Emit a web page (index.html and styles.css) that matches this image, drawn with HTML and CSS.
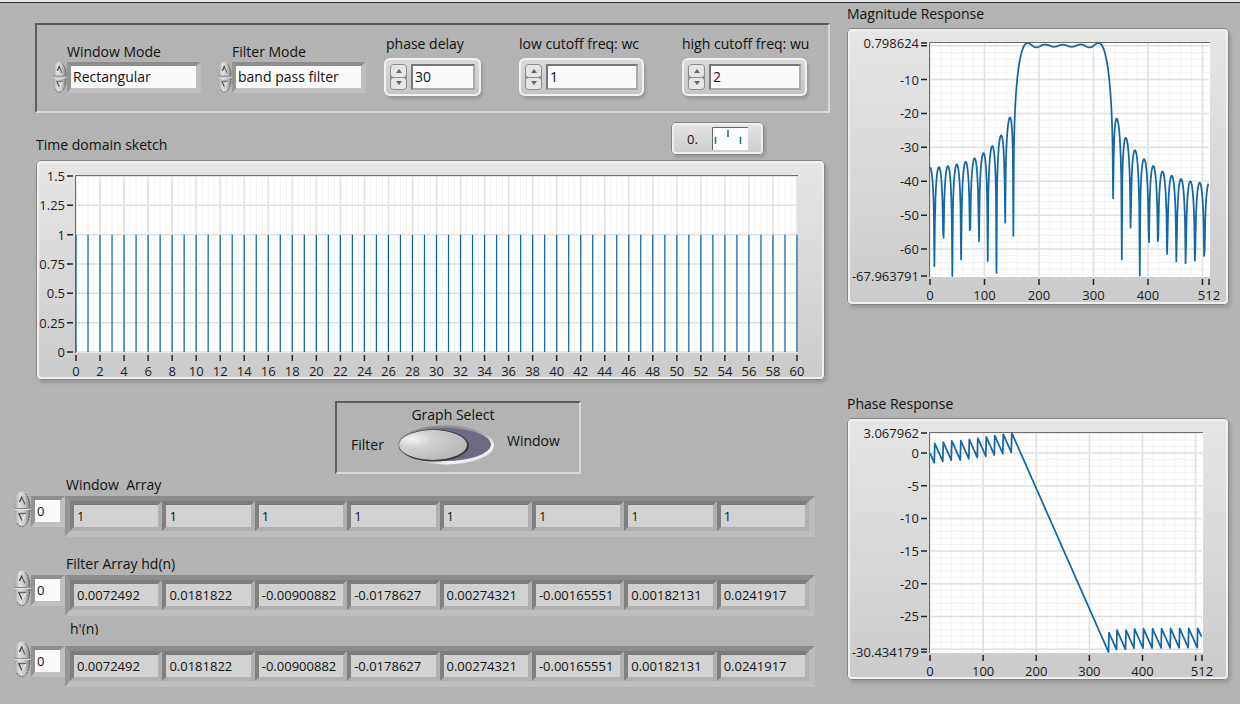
FILE: index.html
```html
<!DOCTYPE html>
<html lang="en">
<head>
<meta charset="utf-8">
<title>FIR Filter Design</title>
<link rel="stylesheet" href="styles.css">
</head>
<body>
<svg class="defs" aria-hidden="true">
  <defs>
    <linearGradient id="oval" x1="0" x2="1" y1="0" y2="0">
      <stop offset="0" stop-color="#a0a0a0"/><stop offset=".35" stop-color="#dedede"/>
      <stop offset=".7" stop-color="#c4c4c4"/><stop offset="1" stop-color="#7c7c7c"/>
    </linearGradient>
    <linearGradient id="rim" x1="0" x2="1" y1="0" y2="1">
      <stop offset="0" stop-color="#777"/><stop offset=".5" stop-color="#a0a0a0"/><stop offset=".75" stop-color="#f4f4f4"/><stop offset="1" stop-color="#ddd"/>
    </linearGradient>
    <radialGradient id="knob" cx=".2" cy=".3" r=".9">
      <stop offset="0" stop-color="#f4f4f4"/><stop offset=".3" stop-color="#d2d2d2"/><stop offset="1" stop-color="#b4b4b4"/>
    </radialGradient>
  </defs>
  <symbol id="ring-up" viewBox="0 0 18 18">
    <path d="M1 17.500C1 8 4 .5 9 .5S17 8 17 17.500Z" fill="url(#oval)"/>
    <path d="M12 2.500C15 5 17 11 17 17" fill="none" stroke="#555" stroke-dasharray="2 1"/>
    <path d="M1 17.500H17" stroke="#8a8a8a"/>
    <path d="M5.500 13L8.500 6.500" stroke="#eee" stroke-width="1.200"/>
    <path d="M8.500 6L12 13.500" stroke="#666" stroke-width="1.300"/>
    <path d="M6.500 11L9 5.500" stroke="#333" stroke-width="1.300"/>
  </symbol>
  <symbol id="ring-down" viewBox="0 0 18 18">
    <path d="M1 .5C1 10 4 17.500 9 17.500S17 10 17 .5Z" fill="url(#oval)"/>
    <path d="M17 1C17 8 14 17.500 9 17.500C7 17.500 5 16 4 14" fill="none" stroke="#5c5c5c" stroke-dasharray="2 1"/>
    <path d="M1 .5H17" stroke="#e2e2e2"/>
    <path d="M5 4.500H13" stroke="#666" stroke-width="1.400"/>
    <path d="M6 5L9 11.500" stroke="#444" stroke-width="1.300"/>
    <path d="M12.500 5L9.500 11.500" stroke="#f0f0f0" stroke-width="1.200"/>
  </symbol>
</svg>
<div class="title-edge"></div>
<main class="front-panel">
  <section class="left">
    <form class="settings sunken">
      <div class="field mode">
        <label for="window-mode">Window Mode</label>
        <div class="ring-row">
          <span class="ring"><button type="button" aria-label="Previous window"><svg><use href="#ring-up"/></svg></button><button type="button" aria-label="Next window"><svg><use href="#ring-down"/></svg></button></span>
          <select id="window-mode" class="bevel"><option>Rectangular</option></select>
        </div>
      </div>
      <div class="field mode">
        <label for="filter-mode">Filter Mode</label>
        <div class="ring-row">
          <span class="ring"><button type="button" aria-label="Previous filter"><svg><use href="#ring-up"/></svg></button><button type="button" aria-label="Next filter"><svg><use href="#ring-down"/></svg></button></span>
          <select id="filter-mode" class="bevel"><option>band pass filter</option></select>
        </div>
      </div>
      <div class="field delay">
        <label for="delay">phase delay</label>
        <div class="numeric"><span class="steps"><button type="button" class="up" aria-label="Increase delay"></button><button type="button" class="down" aria-label="Decrease delay"></button></span><input id="delay" value="30"></div>
      </div>
      <div class="field cutoff">
        <label for="low">low cutoff freq: wc</label>
        <div class="numeric"><span class="steps"><button type="button" class="up" aria-label="Increase low cutoff"></button><button type="button" class="down" aria-label="Decrease low cutoff"></button></span><input id="low" value="1"></div>
      </div>
      <div class="field cutoff">
        <label for="high">high cutoff freq: wu</label>
        <div class="numeric"><span class="steps"><button type="button" class="up" aria-label="Increase high cutoff"></button><button type="button" class="down" aria-label="Decrease high cutoff"></button></span><input id="high" value="2"></div>
      </div>
    </form>

    <div class="sketch-head">
      <h2>Time domain sketch</h2>
      <div class="legend raised">
        <span>0.</span>
        <svg class="sample" viewBox="0 0 36 23" aria-hidden="true">
          <path d="M0 0H36V23H0Z" fill="#fff"/><path d="M.5 23V.5H36" fill="none" stroke="#666"/>
          <path d="M3.500 10V17M16 3V10M28.500 10V17" stroke="#1467a5" stroke-width="1.500"/>
        </svg>
      </div>
    </div>
    <div class="chart time-chart raised"><svg id="time" viewBox="0 0 789 220" role="img" aria-label="Time domain sketch"></svg></div>

    <div class="selector sunken">
      <h2 id="graph-select">Graph Select</h2>
      <div class="selector-row">
        <span>Filter</span>
        <button type="button" class="switch" role="switch" aria-checked="false" aria-labelledby="graph-select">
          <svg viewBox="0 0 98 40">
            <ellipse cx="49" cy="20" rx="48" ry="19.500" fill="url(#rim)"/>
            <ellipse cx="48" cy="19.500" rx="46" ry="16.500" fill="#6c6b83"/>
            <ellipse cx="37" cy="20.500" rx="35" ry="16" fill="#383838"/>
            <ellipse cx="36" cy="20" rx="34" ry="15" fill="url(#knob)"/>
          </svg>
        </button>
        <span class="high">Window</span>
      </div>
    </div>

    <div class="arrays">
      <section class="array">
        <h2>Window&nbsp; Array</h2>
        <div class="array-row">
          <span class="ring"><button type="button" aria-label="Next index"><svg><use href="#ring-up"/></svg></button><button type="button" aria-label="Previous index"><svg><use href="#ring-down"/></svg></button></span>
          <input class="index bevel" aria-label="Window Array index" value="0">
          <div class="cells"><output>1</output><output>1</output><output>1</output><output>1</output><output>1</output><output>1</output><output>1</output><output>1</output></div>
        </div>
      </section>
      <section class="array">
        <h2>Filter Array hd(n)</h2>
        <div class="array-row">
          <span class="ring"><button type="button" aria-label="Next index"><svg><use href="#ring-up"/></svg></button><button type="button" aria-label="Previous index"><svg><use href="#ring-down"/></svg></button></span>
          <input class="index bevel" aria-label="Filter Array index" value="0">
          <div class="cells"><output>0.0072492</output><output>0.0181822</output><output>-0.00900882</output><output>-0.0178627</output><output>0.00274321</output><output>-0.00165551</output><output>0.00182131</output><output>0.0241917</output></div>
        </div>
      </section>
      <section class="array clipped">
        <h2>h'(n)</h2>
        <div class="array-row">
          <span class="ring"><button type="button" aria-label="Next index"><svg><use href="#ring-up"/></svg></button><button type="button" aria-label="Previous index"><svg><use href="#ring-down"/></svg></button></span>
          <input class="index bevel" aria-label="h'(n) index" value="0">
          <div class="cells"><output>0.0072492</output><output>0.0181822</output><output>-0.00900882</output><output>-0.0178627</output><output>0.00274321</output><output>-0.00165551</output><output>0.00182131</output><output>0.0241917</output></div>
        </div>
      </section>
    </div>
  </section>

  <section class="right">
    <h2>Magnitude Response</h2>
    <div class="chart raised"><svg id="magnitude" viewBox="0 0 382 277" role="img" aria-label="Magnitude Response"></svg></div>
    <h2 class="phase-title">Phase Response</h2>
    <div class="chart raised"><svg id="phase" viewBox="0 0 382 262" role="img" aria-label="Phase Response"></svg></div>
  </section>
</main>
<script src="charts.js"></script>
</body>
</html>
```

FILE: styles.css
```css
* { box-sizing: border-box; }

body {
  margin: 0;
  background: #b3b3b3;
  color: #111;
  font: 13px/20px "Open Sans", "Noto Sans", sans-serif;
}

button, input, select { font: inherit; color: inherit; margin: 0; }
h2, label { display: block; margin: 0; font-size: 14px; font-weight: 400; line-height: 20px; white-space: nowrap; }
button { padding: 0; border: 0; background: none; }
.defs { position: absolute; width: 0; height: 0; }

.title-edge { height: 3px; background: #e2e6e4; border-bottom: 1px solid #2b2b2b; }

.front-panel {
  display: grid;
  grid-template-columns: 817fr 382fr;
  gap: 17px;
  padding: 0 11px 16px 13px;
}
.left { padding-top: 20px; min-width: 0; }
.right { padding-top: 1px; min-width: 0; }

.sunken { border: 2px solid; border-color: #5c5c5c #d9d9d9 #d9d9d9 #5c5c5c; }
.raised {
  border-radius: 5px;
  background: linear-gradient(#e6e6e6, #cbcbcb);
  box-shadow: inset 0 0 0 1px #858585, inset 0 0 0 3px #f0f0f0, 2px 3px 3px #999;
}
.bevel {
  border-style: solid;
  border-width: 4px 5px 5px 4px;
  border-color: #8d8d8d #bebebe #c0c0c0 #949494;
  border-radius: 0;
  background: #fafafa;
  outline: 0;
}

.settings { display: flex; justify-content: space-between; margin-left: 22px; height: 90px; padding: 9px 21px 0 15px; }
.mode { padding-top: 8px; width: 149px; }
.mode label { padding-left: 15px; }
.mode + .mode { margin-left: -22px; }
.mode + .delay { margin-left: -20px; }
.ring-row { display: flex; }
.ring { display: flex; flex-direction: column; flex: none; width: 18px; height: 36px; margin-top: -5px; }
.ring button, .ring svg { display: block; width: 100%; height: 100%; min-height: 0; }
.ring button { flex: 1; }
.ring-row .ring { width: 15px; height: 32px; margin-top: -1px; }
.ring-row select { appearance: none; flex: 1; min-width: 0; height: 31px; padding: 0 0 0 2px; font-size: 14px; line-height: 20px; }

.delay { width: 97px; }
.cutoff { width: 125px; }
.delay label, .cutoff label { padding-left: 2px; margin-bottom: 4px; }
.cutoff label { padding-left: 0; }
.numeric {
  display: flex;
  gap: 4px;
  height: 38px;
  padding: 4px;
  border: 2px solid #f2f2f2;
  border-radius: 6px;
  background: linear-gradient(#dadada, #c6c6c6);
  box-shadow: 2px 3px 3px #989898;
}
.steps { display: flex; flex-direction: column; flex: none; width: 17px; gap: 1px; border: 1px solid #8b8b8b; border-radius: 4px; background: #8b8b8b; }
.steps button { flex: 1; display: grid; place-items: center; border-radius: 3px; background: #e6e6e6; }
.steps button::before { content: ""; border: 3px solid transparent; }
.steps .up::before { border-top: 0; border-bottom: 4px solid #666; }
.steps .down::before { border-bottom: 0; border-top: 4px solid #666; }
.numeric input { flex: 1; min-width: 0; border: 2px solid; border-color: #777 #aaa #aaa #777; background: #fafafa; padding: 0 2px; font-size: 14px; outline: 0; }

.sketch-head { display: flex; justify-content: space-between; align-items: flex-end; margin: 9px 66px 5px 23px; }
.legend { display: flex; align-items: center; justify-content: space-between; width: 93px; height: 33px; padding: 0 16px; }
.sample { width: 36px; height: 23px; }
.time-chart { margin: 0 5px 0 23px; }
.chart svg { display: block; width: 100%; height: auto; }

.selector { width: 246px; height: 73px; margin: 21px auto 1px 322px; }
.selector h2 { text-align: center; padding: 2px 10px 0 0; }
.selector-row { display: flex; align-items: center; padding-left: 14px; font-size: 14px; }
.selector-row span { width: 46px; }
.switch, .switch svg { display: block; width: 98px; height: 40px; }
.selector-row .high { align-self: flex-start; width: auto; margin-left: 12px; line-height: 32px; }

.arrays { display: grid; gap: 17px; margin-right: 15px; }
.array h2 { height: 21px; padding-left: 53px; }
.array-row { display: grid; grid-template-columns: 18px 34px 1fr; align-items: start; }
.index { width: 100%; min-width: 0; height: 31px; padding: 0 2px; }
.cells {
  display: grid;
  grid-template-columns: repeat(8, 1fr);
  height: 41px;
  border-style: solid;
  border-width: 5px 6px 6px 5px;
  border-color: #8c8c8c #bcbcbc #bfbfbf #969696;
}
.cells output {
  min-width: 0;
  border: 4px solid;
  border-color: #7c7c7c #b0b0b0 #b0b0b0 #808080;
  background: #d2d2d2;
  padding-left: 3px;
  line-height: 22px;
  white-space: nowrap;
}
.clipped { margin-top: -14px; }
.clipped h2 { height: 16px; margin-bottom: 11px; padding-left: 57px; overflow: hidden; }

.right h2 { margin-bottom: 4px; }
.right .phase-title { margin-top: 89px; }

.axis { fill: #1c1c1c; font-size: 13px; }
.minor { stroke: #f2f2f2; }
.major { stroke: #e0e0e0; stroke-width: 1.5; }
.tick { stroke: #222; stroke-width: 1.5; }
.edge { fill: none; stroke: #6c6c6c; }
.trace { fill: none; stroke: #1467a5; stroke-width: 1.75; stroke-linejoin: round; }
.stems { stroke-width: 1.25; }
```

FILE: charts.js
```js
const NS = "http://www.w3.org/2000/svg";

function add(svg, name, attrs, text) {
  const el = document.createElementNS(NS, name);
  for (const key in attrs) el.setAttribute(key, attrs[key]);
  if (text !== undefined) el.textContent = text;
  svg.appendChild(el);
}

function range(from, to, step) {
  const out = [];
  for (let v = from; v <= to + 1e-9; v += step) out.push(v);
  return out;
}

function chart(id, o) {
  const svg = document.getElementById(id);
  const px = v => o.left + (v - o.x[0]) / (o.x[1] - o.x[0]) * (o.right - o.left);
  const py = v => o.bottom - (v - o.y[0]) / (o.y[1] - o.y[0]) * (o.bottom - o.top);
  add(svg, "rect", { x: o.left, y: o.top - 1, width: o.right - o.left + 1, height: o.bottom - o.top + 2, fill: "#fff" });
  const vertical = list => list.map(v => `M${px(v)} ${o.top}V${o.bottom}`).join("");
  const horizontal = list => list.map(v => `M${o.left} ${py(v)}H${o.right}`).join("");
  add(svg, "path", { class: "minor", d: vertical(o.xMinor) + horizontal(o.yMinor) });
  add(svg, "path", { class: "major", d: vertical(o.xMajor) + horizontal(o.yMajor) });
  add(svg, "path", { class: "edge", d: `M${o.left - 0.5} ${o.bottom + 1}V${o.top - 0.5}H${o.right + 1}` });
  add(svg, "path", { class: "trace " + (o.kind || ""), d: o.trace(px, py) });
  const ticks = o.xTicks.map(v => `M${px(v)} ${o.bottom + 3}v6`).join("") +
    o.yTicks.map(v => `M${o.left - 9} ${py(v)}h6`).join("");
  add(svg, "path", { class: "tick", d: ticks });
  o.xLabels.forEach(v => add(svg, "text", { class: "axis", "text-anchor": "middle", x: px(v), y: o.bottom + 24 }, v));
  o.yLabels.forEach(v => add(svg, "text", { class: "axis", "text-anchor": "end", x: o.left - 11, y: py(v) + 5 }, v));
}

/* Band-pass impulse response, 61 taps, rectangular window */
const DELAY = 30, WC = 1, WU = 2, POINTS = 512;
const taps = range(0, 2 * DELAY, 1).map(n => {
  const m = n - DELAY;
  return m === 0 ? (WU - WC) / Math.PI : (Math.sin(WU * m) - Math.sin(WC * m)) / (Math.PI * m);
});

const magnitude = [], phase = [];
for (let k = 0; k < POINTS; k++) {
  const w = Math.PI * k / POINTS;
  let re = 0, im = 0;
  taps.forEach((h, n) => { re += h * Math.cos(w * n); im -= h * Math.sin(w * n); });
  magnitude.push(20 * Math.log10(Math.hypot(re, im)));
  let a = Math.atan2(im, re);
  if (k) {
    const last = phase[k - 1];
    a -= 2 * Math.PI * Math.round((a - last) / (2 * Math.PI));
  }
  phase.push(a);
}
const line = data => (px, py) => "M" + data.map((v, k) => `${px(k).toFixed(2)} ${py(v).toFixed(2)}`).join("L");

chart("time", {
  left: 40, right: 761, top: 16, bottom: 192, x: [0, 60], y: [0, 1.5], kind: "stems",
  xMinor: range(0, 60, 0.5), yMinor: [], xMajor: range(0, 60, 2), yMajor: range(0, 1.5, 0.25),
  xTicks: range(0, 60, 2), yTicks: range(0, 1.5, 0.25),
  xLabels: range(0, 60, 2), yLabels: range(0, 1.5, 0.25),
  trace: (px, py) => range(0, 60, 1).map(v => `M${px(v)} ${py(0)}V${py(1)}`).join("")
});

chart("magnitude", {
  left: 83, right: 362, top: 15, bottom: 248, x: [0, 512], y: [-67.963791, 0.798624],
  xMinor: range(0, 500, 20), yMinor: range(-66, 0, 2), xMajor: range(0, 500, 100), yMajor: range(-60, 0, 10),
  xTicks: [0, 100, 200, 300, 400, 500, 512], yTicks: [0.798624, 0, -10, -20, -30, -40, -50, -60, -67.963791],
  xLabels: [0, 100, 200, 300, 400, 512], yLabels: [0.798624, -10, -20, -30, -40, -50, -60, -67.963791],
  trace: line(magnitude)
});

chart("phase", {
  left: 83, right: 355, top: 15, bottom: 234, x: [0, 512], y: [-30.434179, 3.067962],
  xMinor: range(0, 500, 20), yMinor: range(-30, 3, 1), xMajor: range(0, 500, 100), yMajor: range(-30, 0, 5),
  xTicks: [0, 100, 200, 300, 400, 500, 512], yTicks: [3.067962, 0, -5, -10, -15, -20, -25, -30, -30.434179],
  xLabels: [0, 100, 200, 300, 400, 512], yLabels: [3.067962, 0, -5, -10, -15, -20, -25, -30.434179],
  trace: line(phase)
});
```
